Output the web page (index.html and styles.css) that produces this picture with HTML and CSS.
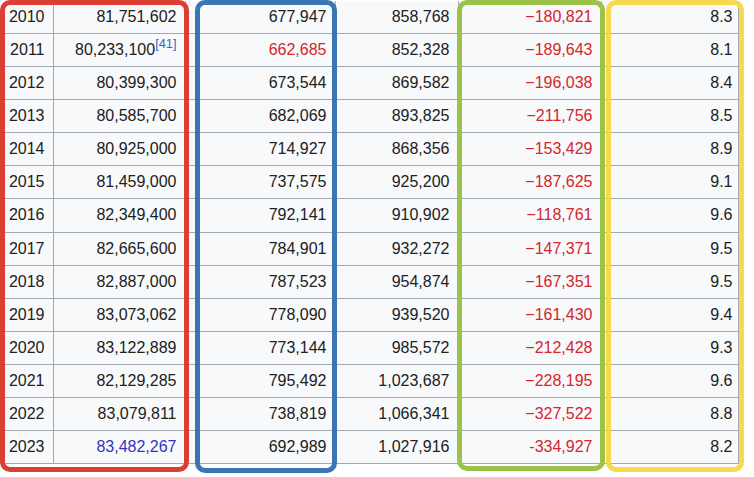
FILE: index.html
```html
<!DOCTYPE html>
<html>
<head>
<meta charset="utf-8">
<link rel="stylesheet" href="styles.css">
</head>
<body>
<div class="wrap">
<table class="t">
<colgroup><col class="c1"><col class="c2"><col class="c3"><col class="c4"><col class="c5"><col class="c6"></colgroup>
<tbody>
<tr><td>2010</td><td>81,751,602</td><td>677,947</td><td>858,768</td><td class="neg">−180,821</td><td class="rate">8.3</td></tr>
<tr><td>2011</td><td>80,233,100<sup class="ref">[41]</sup></td><td class="neg">662,685</td><td>852,328</td><td class="neg">−189,643</td><td class="rate">8.1</td></tr>
<tr><td>2012</td><td>80,399,300</td><td>673,544</td><td>869,582</td><td class="neg">−196,038</td><td class="rate">8.4</td></tr>
<tr><td>2013</td><td>80,585,700</td><td>682,069</td><td>893,825</td><td class="neg">−211,756</td><td class="rate">8.5</td></tr>
<tr><td>2014</td><td>80,925,000</td><td>714,927</td><td>868,356</td><td class="neg">−153,429</td><td class="rate">8.9</td></tr>
<tr><td>2015</td><td>81,459,000</td><td>737,575</td><td>925,200</td><td class="neg">−187,625</td><td class="rate">9.1</td></tr>
<tr><td>2016</td><td>82,349,400</td><td>792,141</td><td>910,902</td><td class="neg">−118,761</td><td class="rate">9.6</td></tr>
<tr><td>2017</td><td>82,665,600</td><td>784,901</td><td>932,272</td><td class="neg">−147,371</td><td class="rate">9.5</td></tr>
<tr><td>2018</td><td>82,887,000</td><td>787,523</td><td>954,874</td><td class="neg">−167,351</td><td class="rate">9.5</td></tr>
<tr><td>2019</td><td>83,073,062</td><td>778,090</td><td>939,520</td><td class="neg">−161,430</td><td class="rate">9.4</td></tr>
<tr><td>2020</td><td>83,122,889</td><td>773,144</td><td>985,572</td><td class="neg">−212,428</td><td class="rate">9.3</td></tr>
<tr><td>2021</td><td>82,129,285</td><td>795,492</td><td>1,023,687</td><td class="neg">−228,195</td><td class="rate">9.6</td></tr>
<tr><td>2022</td><td>83,079,811</td><td>738,819</td><td>1,066,341</td><td class="neg">−327,522</td><td class="rate">8.8</td></tr>
<tr><td>2023</td><td class="est">83,482,267</td><td>692,989</td><td>1,027,916</td><td class="neg">-334,927</td><td class="rate">8.2</td></tr>
</tbody>
</table>
<div class="box red"></div>
<div class="box blue"></div>
<div class="box green"></div>
<div class="box yellow"></div>
</div>
</body>
</html>
```

FILE: styles.css
```css
html, body {
  margin: 0;
  padding: 0;
  background: #ffffff;
}
body {
  font-family: "Liberation Sans", Arial, sans-serif;
  font-size: 16px;
  color: #202122;
}
.wrap {
  position: relative;
  width: 754px;
  height: 477px;
  overflow: hidden;
  padding-top: 1px;
  box-sizing: border-box;
}
.t {
  border-collapse: collapse;
  table-layout: fixed;
  width: 738px;
  background: #f8f9fa;
}
.c1 { width: 53px; }
.c2 { width: 132px; }
.c3 { width: 150px; }
.c4 { width: 123px; }
.c5 { width: 143px; }
.c6 { width: 137px; }
.t td {
  border: 1px solid #a2a9b1;
  padding: 0 8px 0 8px;
  height: 32.08px;
  line-height: 32.08px;
  text-align: right;
  white-space: nowrap;
  box-sizing: border-box;
}
.t tr:first-child td { border-top: 0; }
.t td:first-child { border-left: 0; }
.t td.rate { padding-right: 5px; }
.neg { color: #d4262c; }
.est { color: #3434c0; }
.ref {
  font-size: 12.8px;
  line-height: 1;
  color: #3366cc;
  vertical-align: 0;
  position: relative;
  top: -7px;
}
.box {
  position: absolute;
  top: 0;
  border: 5px solid;
  border-radius: 10px;
  box-sizing: border-box;
}
.red { left: 0; width: 189px; height: 472px; border-color: #dc3e32; }
.blue { left: 195px; width: 142px; height: 473px; border-color: #3a76b4; }
.green { left: 457px; width: 148px; height: 471px; border-color: #9bc34b; }
.yellow { left: 606px; width: 138px; height: 472px; border-color: #f6d94c; }
```
